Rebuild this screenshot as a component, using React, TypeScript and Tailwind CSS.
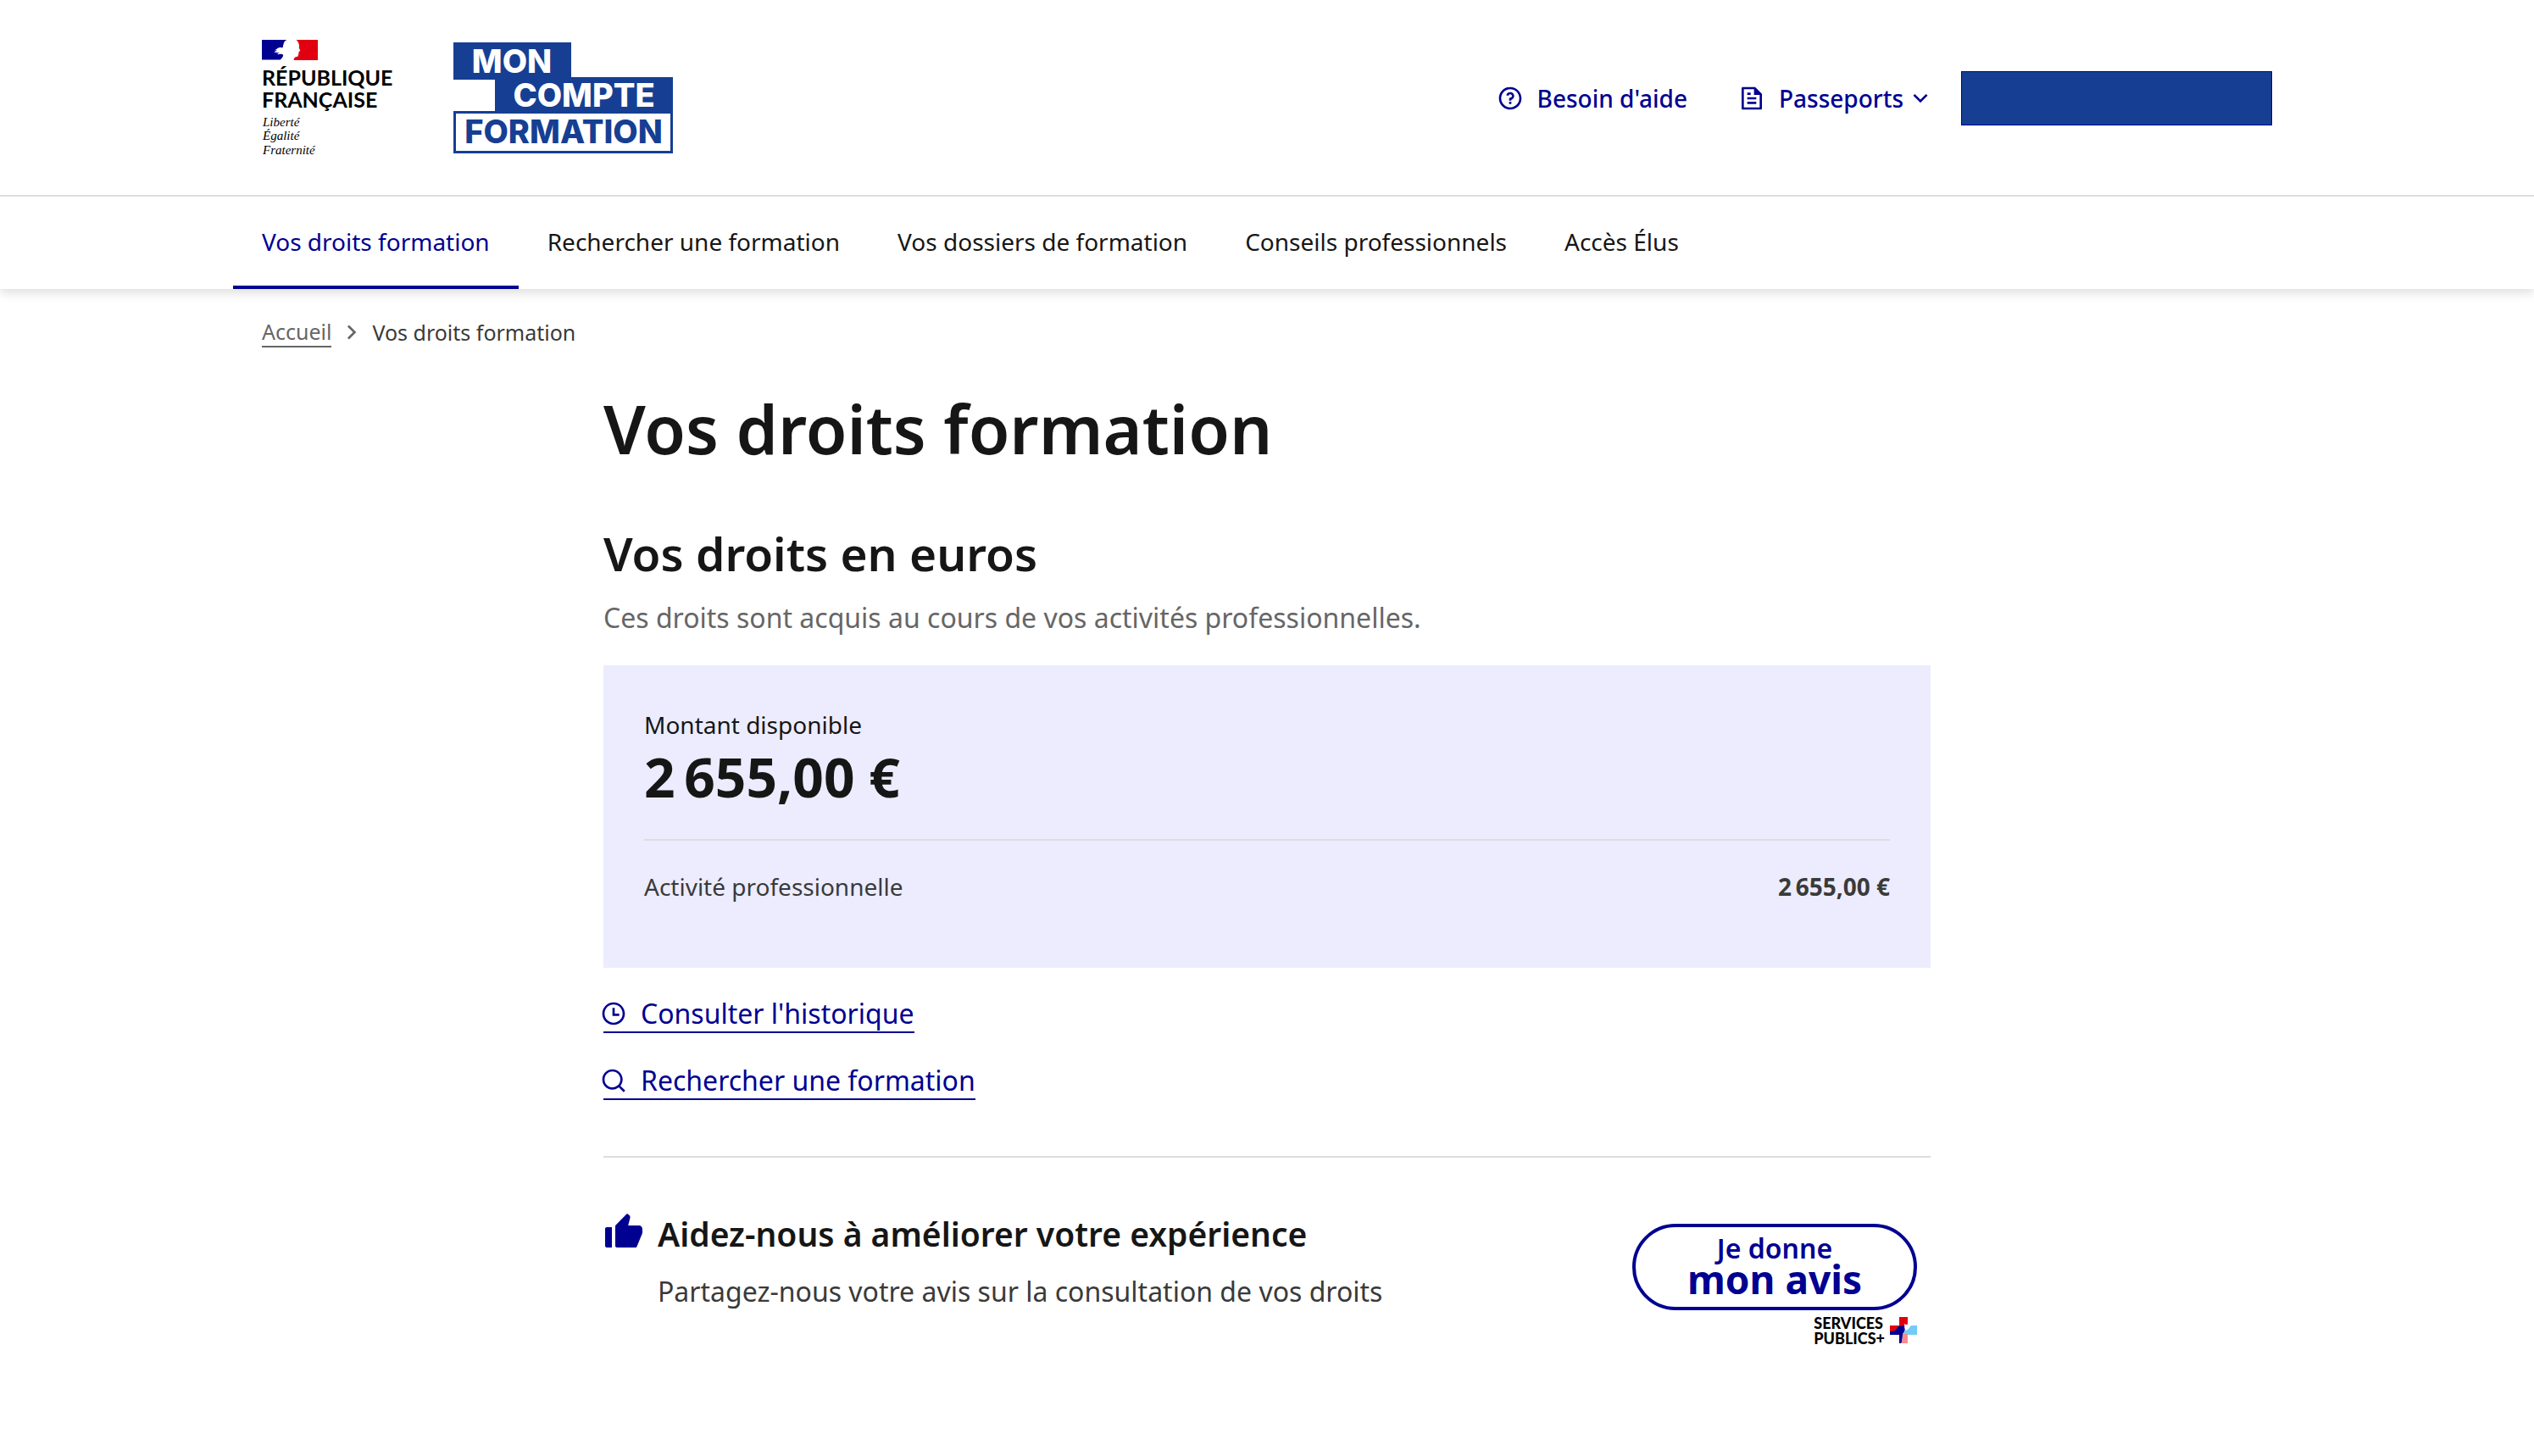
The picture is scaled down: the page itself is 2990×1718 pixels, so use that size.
import React from 'react';
import {
  RiArrowDownSLine,
  RiArrowRightSLine,
  RiFileTextLine,
  RiQuestionLine,
  RiSearchLine,
  RiThumbUpFill,
  RiTimeLine,
} from 'react-icons/ri';

const NAV_ITEMS = [
  { label: 'Vos droits formation', active: true },
  { label: 'Rechercher une formation', active: false },
  { label: 'Vos dossiers de formation', active: false },
  { label: 'Conseils professionnels', active: false },
  { label: 'Accès Élus', active: false },
];

const ACTIONS = [
  { label: "Consulter l'historique", icon: RiTimeLine },
  { label: 'Rechercher une formation', icon: RiSearchLine },
];

function RepubliqueLogo() {
  return (
    <svg width="160" height="144" viewBox="0 0 160 144" className="shrink-0">
      <path
        d="M0 3h29.500c-2 .8-3 2-3.500 3.500l-1 3.500c-.3 1.500 0 2-1 2.500-2-.8-4-.6-5.500.5l-3.500 2.500 3-.5-4 3 4.500-1-1.500 1.500 4-.5-3 2 5-.5c1.500.5 2.500 1 2 2.500-.5 1.500-1.500 3-3.500 4.500H0z"
        fill="#000091"
      />
      <path
        d="M40.500 3H66v24H37.500c.5-2.500 1.500-4 3.500-4 1.500 0 2-.7 1.700-2l.8-1-.5-1 .8-1-.2-1 1.700-1.200-1.500-3.300c.5-2 .2-4-.5-5.500-.5-1.500-1.300-3-3-4z"
        fill="#e1000f"
      />
      <path d="M16 17.500c3-1.500 6-2 9-1M19 20c2-1.500 4-1.500 6-.5" stroke="#fff" strokeWidth="1" fill="none" />
      <g className="font-['Lato',sans-serif] text-[25px] font-bold">
        <text x="0" y="57">RÉPUBLIQUE</text>
        <text x="0" y="83">FRANÇAISE</text>
      </g>
      <g className="font-['Liberation_Serif',serif] text-[15px] italic">
        <text x="1" y="105">Liberté</text>
        <text x="1" y="121">Égalité</text>
        <text x="1" y="138">Fraternité</text>
      </g>
    </svg>
  );
}

function CompteFormationLogo() {
  return (
    <svg width="260" height="148" viewBox="0 -8 260 148" className="shrink-0">
      <path d="M0 0h139v41h120v90H0V81h49V44H0z" fill="#163f93" />
      <path d="M3 84h253v44H3z" fill="#fff" />
      <g className="font-['Inter',sans-serif] text-[38px] font-extrabold">
        <text x="69" y="36" textAnchor="middle" fill="#fff">MON</text>
        <text x="154" y="76" textAnchor="middle" fill="#fff">COMPTE</text>
        <text x="130" y="119" textAnchor="middle" fill="#163f93">FORMATION</text>
      </g>
    </svg>
  );
}

function ServicesPublicsIcon() {
  return (
    <svg width="32" height="32" viewBox="0 0 32 32">
      <path d="M11 0h10v8l-3 3-7 0z" fill="#e1000f" />
      <path d="M0 10h11v7H0z" fill="#e1000f" />
      <path d="M0 17l6-1 4-5 7-1 1 5-3 6-1 10h-3V21H0z" fill="#000091" />
      <path d="M17 8l4 2v2l3 1-3 2-3 2z" fill="#fff" />
      <path d="M32 10v11H18l-3-1 3-4 3-1 4-5z" fill="#73ccf7" />
      <path d="M15 20h6v11h-8l2-4z" fill="#f98c8c" />
    </svg>
  );
}

function Header() {
  return (
    <header className="bg-white shadow-[0_4px_12px_rgba(0,0,0,0.14)]">
      <div className="border-b-2 border-[#dddddd]">
        <div className="mx-auto flex h-[230px] w-full max-w-[2372px] items-center justify-between pt-px">
          <div className="flex items-center gap-[66px]">
            <RepubliqueLogo />
            <CompteFormationLogo />
          </div>
          <div className="flex items-center text-[28px] font-medium text-[#000091]">
            <a href="#" className="flex items-center gap-4">
              <RiQuestionLine className="size-8" />
              Besoin d'aide
            </a>
            <button type="button" className="ml-[60px] flex items-center gap-4">
              <RiFileTextLine className="size-8" />
              Passeports
              <RiArrowDownSLine className="-ml-3 size-8" />
            </button>
            <button
              type="button"
              aria-label="Mon compte"
              className="ml-8 h-16 w-[367px] border border-[#000091] bg-[#163f93]"
            />
          </div>
        </div>
      </div>
      <nav className="mx-auto flex w-full max-w-[2440px]">
        {NAV_ITEMS.map((item) => (
          <a
            key={item.label}
            href="#"
            className={`flex h-[109px] items-center border-b-4 px-[34px] text-[28px] ${
              item.active ? 'border-[#000091] text-[#000091]' : 'border-transparent text-[#161616]'
            }`}
          >
            {item.label}
          </a>
        ))}
      </nav>
    </header>
  );
}

function RightsCard() {
  return (
    <section className="mt-8 bg-[#ececfe] px-12 pt-[50px] pb-[72px]">
      <p className="text-[28px] leading-10">Montant disponible</p>
      <p className="mt-[6px] text-[64px] leading-[72px] font-bold">2&#8201;655,00 €</p>
      <hr className="mt-[37px] border-t-2 border-[#dddddd]" />
      <div className="mt-[30px] flex justify-between text-[28px] leading-[48px] text-[#3a3a3a]">
        <span>Activité professionnelle</span>
        <span className="font-bold">2&#8201;655,00 €</span>
      </div>
    </section>
  );
}

function Feedback() {
  return (
    <section className="mt-16 flex items-start justify-between">
      <div className="flex gap-4">
        <RiThumbUpFill className="size-12 shrink-0 text-[#000091]" />
        <div className="pt-[2px]">
          <h3 className="text-[39px] leading-[48px] font-semibold">
            Aidez-nous à améliorer votre expérience
          </h3>
          <p className="mt-5 text-[32px] leading-[48px] text-[#3a3a3a]">
            Partagez-nous votre avis sur la consultation de vos droits
          </p>
        </div>
      </div>
      <a href="#" className="mt-[14px] mr-4 flex w-[336px] flex-col items-end">
        <span className="flex h-[102px] w-full flex-col items-center justify-center rounded-full border-4 border-[#000091] pb-2 text-[#000091]">
          <span className="text-[32px] leading-[36px] font-semibold">Je donne</span>
          <span className="text-[46px] leading-[36px] font-bold">mon avis</span>
        </span>
        <span className="mt-[6px] flex items-center gap-[6px]">
          <span className="font-['Lato',sans-serif] text-[18px] leading-[18px] font-black text-black">
            SERVICES
            <br />
            PUBLICS+
          </span>
          <ServicesPublicsIcon />
        </span>
      </a>
    </section>
  );
}

export default function App() {
  return (
    <div className="min-h-screen bg-white font-['Noto_Sans',sans-serif] text-[#161616]">
      <Header />
      <nav className="mx-auto flex w-full max-w-[2372px] items-center pt-[31px] text-[25px] leading-10">
        <a href="#" className="border-b-2 border-[#666666] leading-[34px] text-[#666666]">
          Accueil
        </a>
        <RiArrowRightSLine className="mx-2 size-8 text-[#666666]" />
        <span className="text-[#3a3a3a]">Vos droits formation</span>
      </nav>
      <main className="mx-auto w-full max-w-[1566px]">
        <h1 className="mt-[46px] text-[79px] leading-[96px] font-semibold">Vos droits formation</h1>
        <h2 className="mt-[63px] text-[55px] leading-[72px] font-semibold">Vos droits en euros</h2>
        <p className="mt-4 text-[32px] leading-[48px] text-[#666666]">
          Ces droits sont acquis au cours de vos activités professionnelles.
        </p>
        <RightsCard />
        <div className="mt-[29px] flex flex-col items-start gap-[31px]">
          {ACTIONS.map(({ label, icon: Icon }) => (
            <a
              key={label}
              href="#"
              className="flex items-center gap-4 border-b-2 border-[#000091] pt-1 text-[32px] leading-[42px] text-[#000091]"
            >
              <Icon className="-ml-1 size-8" />
              {label}
            </a>
          ))}
        </div>
        <hr className="mt-[66px] border-t-2 border-[#dddddd]" />
        <Feedback />
      </main>
    </div>
  );
}
